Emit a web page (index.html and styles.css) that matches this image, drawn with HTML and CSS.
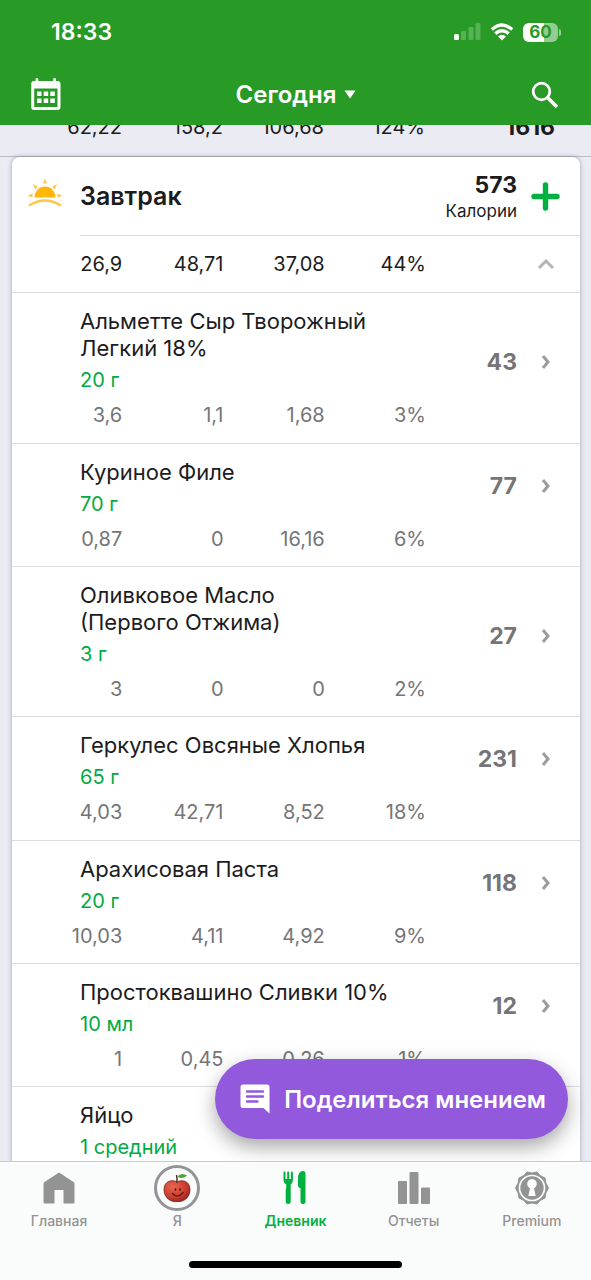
FILE: index.html
```html
<!DOCTYPE html>
<html lang="ru">
<head>
<meta charset="utf-8">
<meta name="viewport" content="width=device-width, initial-scale=1">
<title>Дневник питания</title>
<link rel="stylesheet" href="styles.css">
</head>
<body>
<div class="app">
  <header class="header">
    <div class="status">
      <span class="clock">18:33</span>
      <div class="status-icons">
        <svg width="27" height="18" viewBox="0 0 27 18" fill="#fff" aria-hidden="true">
          <rect x="0" y="11" width="5" height="6" rx="1.5"/>
          <g opacity=".22"><rect x="7" y="8" width="5" height="9" rx="1"/><rect x="14.500" y="4" width="5" height="13" rx="1"/><rect x="21.500" y="0" width="5" height="17" rx="1"/></g>
        </svg>
        <svg width="24" height="18" viewBox="0 0 24 18" fill="none" stroke="#fff" stroke-width="3.400" aria-hidden="true">
          <path d="M1.800 6.600Q12-2.600 22.200 6.600M5.300 10.600Q12 4.800 18.700 10.600"/>
          <path d="M8 13.500Q12 10.200 16 13.500L12 17.500Z" fill="#fff" stroke="none"/>
        </svg>
        <span class="battery">60</span>
      </div>
    </div>
    <div class="toolbar">
      <button class="tool" aria-label="Календарь">
        <svg width="30" height="33" viewBox="0 0 30 33" aria-hidden="true">
          <path d="M3 3H4.500V1.500a1.400 1.400 0 0 1 2.800 0V3H22.200V1.500a1.400 1.400 0 0 1 2.800 0V3h1.500A3 3 0 0 1 29.500 6V29a3 3 0 0 1-3 3H3.200A3 3 0 0 1 .200 29V6A3 3 0 0 1 3 3Z" fill="#fff"/>
          <path d="M3.200 10.500H26.500V29H3.200Z" fill="#279b25"/>
          <path d="M6 13.500h4.500v4.500H6zM12.700 13.500h4.500v4.500h-4.500zM19.300 13.500h4.500v4.500h-4.500zM6 20.500h4.500V25H6zM12.700 20.500h4.500V25h-4.500zM19.300 20.500h4.500V25h-4.500z" fill="#fff"/>
        </svg>
      </button>
      <button class="day">Сегодня
        <svg width="12" height="9" viewBox="0 0 12 9" aria-hidden="true"><path d="M.500.500h11L6 8.500Z" fill="#fff"/></svg>
      </button>
      <button class="tool" aria-label="Поиск">
        <svg width="28" height="28" viewBox="0 0 28 28" fill="none" stroke="#fff" stroke-width="2.800" aria-hidden="true"><circle cx="10.500" cy="10.500" r="8.300"/><path d="M16.500 16.500L26 26" stroke-width="3.400"/></svg>
      </button>
    </div>
  </header>

  <main class="diary">
    <div class="summary">
      <div class="macros"><span>62,22</span><span>158,2</span><span>106,68</span><span>124%</span></div>
      <strong class="total">1616</strong>
    </div>

    <section class="meal">
      <div class="meal-head">
        <svg class="sun" width="36" height="30" viewBox="0 0 36 30" aria-hidden="true">
          <path d="M7.500 19.500a10.500 11 0 0 1 21 0Z" fill="#ffb60a"/>
          <path d="M16 5.500L18 .500l2 5zM6 6l4.800 2.800-2.600 2.600zM30 6l-4.800 2.800 2.600 2.600zM.500 17.800l5-2.200v3.900zM35.500 17.800l-5-2.200v3.900z" fill="#ffc64a"/>
          <path d="M2 27.500Q18 17.500 34 27.500" fill="none" stroke="#ffc64a" stroke-width="2.600"/>
        </svg>
        <div class="meal-bar">
          <h2 class="meal-title">Завтрак</h2>
          <div class="meal-total"><strong>573</strong><span>Калории</span></div>
          <button class="add" aria-label="Добавить">
            <svg width="29" height="29" viewBox="0 0 29 29" aria-hidden="true"><path d="M14.500 3V26M3 14.500H26" stroke="#00b140" stroke-width="5.400" stroke-linecap="round"/></svg>
          </button>
        </div>
      </div>
      <div class="meal-sum">
        <div class="macros"><span>26,9</span><span>48,71</span><span>37,08</span><span>44%</span></div>
        <button class="fold" aria-label="Свернуть">
          <svg width="18" height="12" viewBox="0 0 18 12" aria-hidden="true"><path d="M2 10L9 3l7 7" fill="none" stroke="#b3b3b3" stroke-width="3"/></svg>
        </button>
      </div>

      <ul class="foods">
        <li><a class="food" href="#"><div class="info"><span class="name">Альметте Сыр Творожный<br>Легкий 18%</span><span class="portion">20 г</span><div class="macros"><span>3,6</span><span>1,1</span><span>1,68</span><span>3%</span></div></div><strong class="kcal">43</strong><svg class="go" width="10" height="16" viewBox="0 0 10 16"><path d="M2 2l5 6-5 6" /></svg></a></li>
        <li><a class="food" href="#"><div class="info"><span class="name">Куриное Филе</span><span class="portion">70 г</span><div class="macros"><span>0,87</span><span>0</span><span>16,16</span><span>6%</span></div></div><strong class="kcal">77</strong><svg class="go" width="10" height="16" viewBox="0 0 10 16"><path d="M2 2l5 6-5 6" /></svg></a></li>
        <li><a class="food" href="#"><div class="info"><span class="name">Оливковое Масло<br>(Первого Отжима)</span><span class="portion">3 г</span><div class="macros"><span>3</span><span>0</span><span>0</span><span>2%</span></div></div><strong class="kcal">27</strong><svg class="go" width="10" height="16" viewBox="0 0 10 16"><path d="M2 2l5 6-5 6" /></svg></a></li>
        <li><a class="food" href="#"><div class="info"><span class="name">Геркулес Овсяные Хлопья</span><span class="portion">65 г</span><div class="macros"><span>4,03</span><span>42,71</span><span>8,52</span><span>18%</span></div></div><strong class="kcal">231</strong><svg class="go" width="10" height="16" viewBox="0 0 10 16"><path d="M2 2l5 6-5 6" /></svg></a></li>
        <li><a class="food" href="#"><div class="info"><span class="name">Арахисовая Паста</span><span class="portion">20 г</span><div class="macros"><span>10,03</span><span>4,11</span><span>4,92</span><span>9%</span></div></div><strong class="kcal">118</strong><svg class="go" width="10" height="16" viewBox="0 0 10 16"><path d="M2 2l5 6-5 6" /></svg></a></li>
        <li><a class="food" href="#"><div class="info"><span class="name">Простоквашино Сливки 10%</span><span class="portion">10 мл</span><div class="macros"><span>1</span><span>0,45</span><span>0,26</span><span>1%</span></div></div><strong class="kcal">12</strong><svg class="go" width="10" height="16" viewBox="0 0 10 16"><path d="M2 2l5 6-5 6" /></svg></a></li>
        <li><a class="food" href="#"><div class="info"><span class="name">Яйцо</span><span class="portion">1 средний</span></div></a></li>
      </ul>
    </section>

    <button class="feedback">
      <svg width="30" height="30" viewBox="0 0 30 30" aria-hidden="true"><path d="M3 .500H27a2.500 2.500 0 0 1 2.500 2.500V29.500L23.500 24H3A2.500 2.500 0 0 1 .500 21.500V3A2.500 2.500 0 0 1 3 .500Z" fill="#fff"/><path d="M7 7.500H23M7 12.500H23M7 17.500H17.500" stroke="#9259dc" stroke-width="2.400" stroke-linecap="round"/></svg>
      Поделиться мнением
    </button>
  </main>

  <nav class="tabs">
    <div class="tab-row">
      <a class="tab" href="#"><span class="tab-icon"><svg width="32" height="32" viewBox="0 0 32 32"><path d="M16 .500L30.500 10q1 .700 1 2V30.500q0 1-1 1H20.500V18h-9V31.500H1.500q-1 0-1-1V12q0-1.300 1-2Z" fill="#939393"/></svg></span>Главная</a>
      <a class="tab" href="#"><span class="tab-icon avatar"><svg width="30" height="32" viewBox="0 0 30 32">
        <defs><radialGradient id="apple" cx=".35" cy=".3" r=".8"><stop offset="0" stop-color="#e8664f"/><stop offset=".6" stop-color="#cb3d30"/><stop offset="1" stop-color="#8d221d"/></radialGradient></defs>
        <path d="M15 10C10 7 2 9 2 17.500S9 30.500 15 29.500C21 30.500 28 26 28 17.500S20 7 15 10Z" fill="url(#apple)" stroke="#71251e" stroke-width=".8"/>
        <path d="M14.800 11Q15.500 7 14.500 3" fill="none" stroke="#553321" stroke-width="1.500"/>
        <path d="M15.500 4.500Q19 0 25 3.500Q20 8 15.500 4.500Z" fill="#4da43a"/>
        <path d="M10 21Q16 27.500 21.500 20" fill="none" stroke="#511813" stroke-width="1.200"/>
        <ellipse cx="13.500" cy="17.500" rx=".8" ry="1.300" fill="#401410"/><ellipse cx="18" cy="17.500" rx=".8" ry="1.300" fill="#401410"/>
      </svg></span>Я</a>
      <a class="tab active" href="#" aria-current="page"><span class="tab-icon"><svg width="24" height="34" viewBox="0 0 24 34" fill="#00b140">
        <path d="M.500 1.500q0-1 1-1t1 1V8H4.200V1.500q0-1 1-1t1 1V8H7.900V1.500q0-1 1-1t1 1V9q0 3-2.200 4.200V18q0 0 0 2V30.500q0 2.500-2.500 2.500t-2.500-2.500V20q0-2 .500-3V13.200Q.500 12 .500 9Z"/>
        <path d="M15 8Q15 0 20 0q2.500 0 2.500 3V30.500q0 2.500-2.500 2.500t-2.500-2.500V17Q15 17 15 14Z"/>
      </svg></span>Дневник</a>
      <a class="tab" href="#"><span class="tab-icon"><svg width="32" height="32" viewBox="0 0 32 32" fill="#939393"><rect y="9" width="9" height="23" rx="1"/><rect x="11.500" width="9" height="32" rx="1"/><rect x="23" y="15.500" width="9" height="16.500" rx="1"/></svg></span>Отчеты</a>
      <a class="tab" href="#"><span class="tab-icon"><svg width="34" height="34" viewBox="0 0 34 34">
        <path d="M12 1Q17 3 22 1L25 4.500L30 7Q30 12 33.500 17Q30 22 30 27L25 29.500L22 33Q17 31 12 33L9 29.500L4 27Q4 22 .500 17Q4 12 4 7L9 4.500Z" fill="#939393" stroke="#939393" stroke-linejoin="round"/>
        <circle cx="17" cy="17" r="12.500" fill="none" stroke="#fafbfb" stroke-width="1.700"/>
        <path d="M15 17.200A4.800 4.800 0 1 1 19 17.200L20.700 25H13.300Z" fill="#fafbfb"/>
      </svg></span>Premium</a>
    </div>
    <div class="home-bar"></div>
  </nav>
</div>
</body>
</html>
```
FILE: styles.css
```css
* { box-sizing: border-box; }

body {
  margin: 0;
  font-family: Inter, "Noto Sans", sans-serif;
  color: #1c1c1e;
}

button {
  border: 0;
  padding: 0;
  background: none;
  font: inherit;
  color: inherit;
}

a { color: inherit; text-decoration: none; }

svg { display: block; flex: none; }

.app {
  display: flex;
  flex-direction: column;
  height: 100vh;
  background: #eaebf3;
}

/* Header */
.header {
  position: relative;
  z-index: 2;
  flex: none;
  background: #279b25;
  color: #fff;
}

.status {
  display: flex;
  justify-content: space-between;
  align-items: center;
  height: 64px;
  padding: 0 33px 0 51px;
}

.clock { font-size: 23px; font-weight: 600; }

.status-icons { display: flex; align-items: center; gap: 9px; }

.battery {
  position: relative;
  width: 35px;
  height: 19px;
  border-radius: 6px;
  background: linear-gradient(90deg, #fff 60%, #93cd92 60%);
  color: #279b25;
  font-size: 17px;
  font-weight: 700;
  line-height: 19px;
  text-align: center;
}

.battery::after {
  content: "";
  position: absolute;
  left: 36px;
  top: 6px;
  width: 2px;
  height: 7px;
  border-radius: 0 2px 2px 0;
  background: #93cd92;
}

.toolbar {
  display: flex;
  justify-content: space-between;
  align-items: center;
  height: 61px;
  padding: 0 32px 0 31px;
}

.day {
  display: flex;
  align-items: center;
  gap: 8px;
  font-size: 24px;
  font-weight: 600;
}

/* Diary */
.diary {
  position: relative;
  flex: 1;
  min-height: 0;
  overflow: hidden;
}

.macros {
  display: grid;
  grid-template-columns: repeat(4, 1fr);
  flex: 1;
  text-align: right;
  font-size: 20px;
  line-height: 34px;
}

.summary {
  display: flex;
  align-items: center;
  height: 47px;
  margin-top: -15px;
  padding: 0 36px 12px 21px;
  border-bottom: 1px solid #b9bac4;
}

.total {
  width: 130px;
  text-align: right;
  font-size: 23px;
  font-weight: 700;
}

.meal {
  margin: 0 11px 0 12px;
  border-radius: 8px 8px 0 0;
  background: #fff;
  box-shadow: 0 0 5px rgba(60, 60, 90, .4);
}

.meal-head { display: flex; }

.sun { margin: 21px 17px 0 15px; }

.meal-bar {
  display: flex;
  flex: 1;
  align-items: center;
  height: 79px;
  padding-right: 20px;
  border-bottom: 1px solid #dcdde0;
}

.meal-title {
  flex: 1;
  margin: 0;
  font-size: 25px;
  font-weight: 600;
}

.meal-total {
  display: flex;
  flex-direction: column;
  margin-right: 14px;
  padding-top: 3px;
  text-align: right;
  font-size: 17px;
  line-height: 26px;
}

.meal-total strong { font-size: 23px; }

.meal-sum {
  display: flex;
  align-items: center;
  height: 57px;
  padding: 0 25px 0 9px;
  border-bottom: 1px solid #dcdde0;
}

.fold { width: 129px; }

.fold svg { margin-left: auto; }

.foods { margin: 0; padding: 0; list-style: none; }

.foods li { border-bottom: 1px solid #dcdde0; }

.foods li:nth-child(3n + 1) { padding-bottom: 1px; }

.food {
  display: flex;
  align-items: flex-end;
  padding: 15px 29px 10px 68px;
}

.info { display: flex; flex: 1; flex-direction: column; }

.info .macros { margin-left: -59px; color: #757578; }

.name { font-size: 22px; line-height: 27px; }

.portion { font-size: 20px; line-height: 36px; color: #00ab42; }

.kcal {
  width: 91px;
  margin-bottom: 56px;
  text-align: right;
  font-size: 23px;
  line-height: 28px;
  color: #757578;
}

.go {
  margin: 0 0 62px 24px;
  fill: none;
  stroke: #9c9ca0;
  stroke-width: 3;
}

.feedback {
  position: absolute;
  right: 23px;
  bottom: 22px;
  display: flex;
  align-items: center;
  gap: 14px;
  height: 80px;
  padding: 0 22px 0 25px;
  border-radius: 40px;
  background: #9259dc;
  box-shadow: 0 8px 20px rgba(0, 0, 0, .35);
  color: #fff;
  font-size: 24px;
  font-weight: 600;
  white-space: nowrap;
}

/* Bottom tabs */
.tabs {
  position: relative;
  z-index: 2;
  flex: none;
  height: 119px;
  border-top: 1px solid #c9cacc;
  background: #fafbfb;
}

.tab-row { display: grid; grid-template-columns: repeat(5, 1fr); }

.tab {
  display: flex;
  flex-direction: column;
  align-items: center;
  padding-top: 3px;
  color: #939393;
  font-size: 14px;
  font-weight: 500;
  line-height: 20px;
}

.tab.active { color: #00b140; font-weight: 600; }

.tab-icon {
  display: flex;
  align-items: center;
  justify-content: center;
  width: 46px;
  height: 46px;
}

.avatar { border: 3px solid #939398; border-radius: 50%; }

.home-bar {
  width: 36%;
  height: 7px;
  margin: 30px auto 0;
  border-radius: 4px;
  background: #000;
}
```
